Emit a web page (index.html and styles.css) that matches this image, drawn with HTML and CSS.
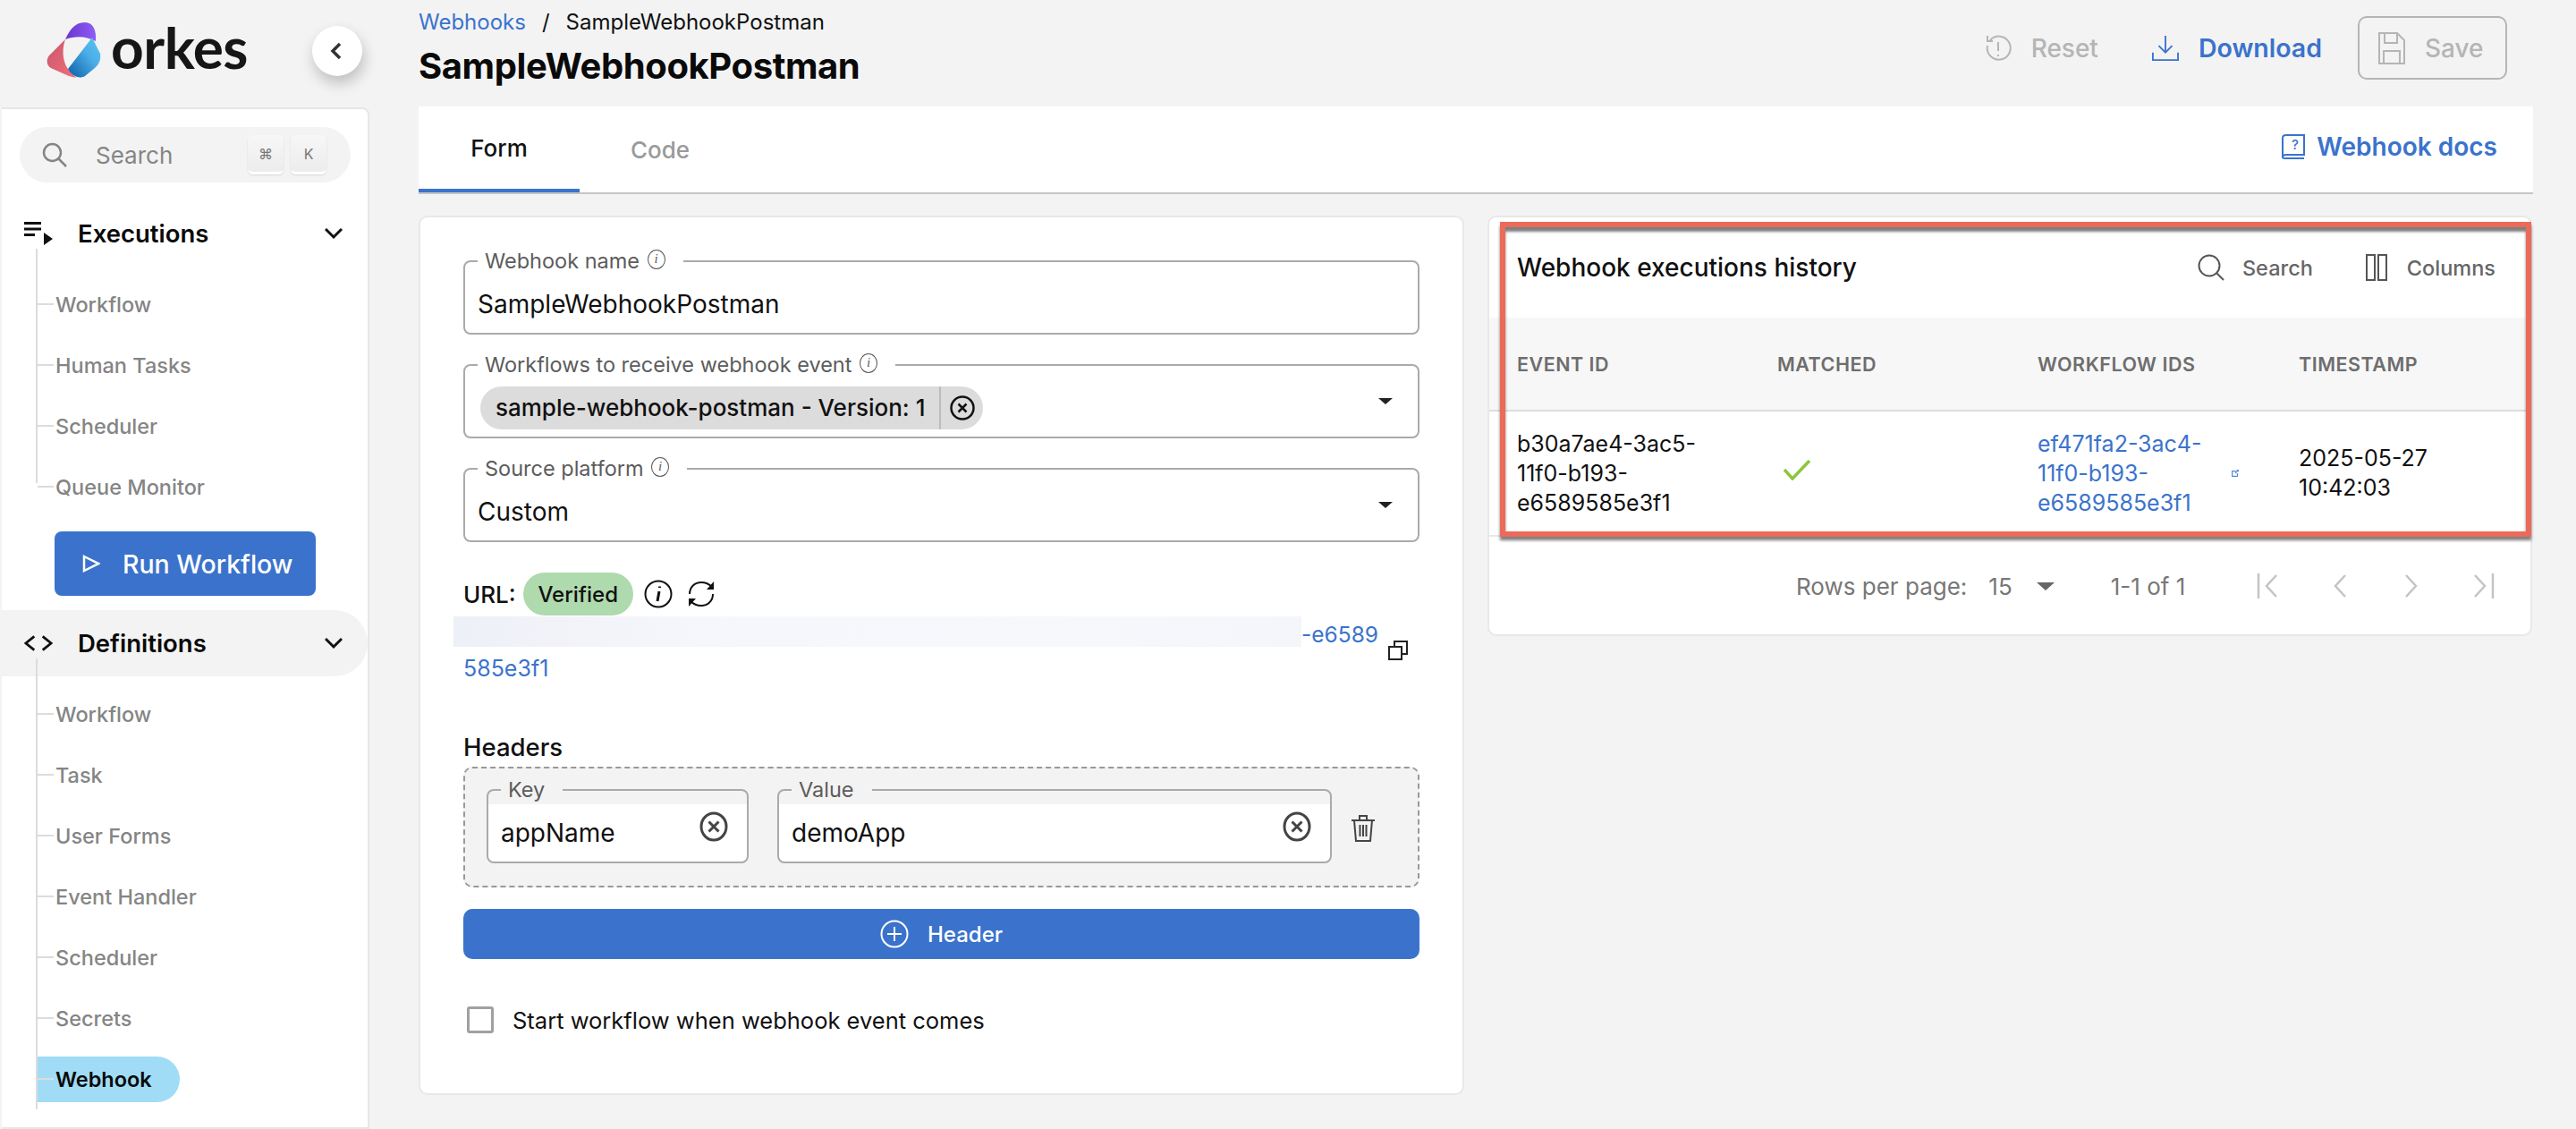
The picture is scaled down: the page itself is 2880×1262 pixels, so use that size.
FILE: index.html

```html
<!DOCTYPE html>
<html lang="en">
<head>
  <meta charset="UTF-8">
  <title>SampleWebhookPostman</title>
  <link rel="stylesheet" href="styles.css">
</head>
<body>
  <div class="app">
    <aside class="sidebar">
      <div class="brand">
        <svg class="logo-mark" viewBox="0 0 61 62">
          <defs>
            <linearGradient id="lgPurple" x1="0" y1="0" x2="1" y2="0"><stop offset="0" stop-color="#6a35d0"/><stop offset="1" stop-color="#8f5cf5"/></linearGradient>
            <linearGradient id="lgBlue" x1="0" y1="1" x2="1" y2="0"><stop offset="0" stop-color="#0d5ea8"/><stop offset=".6" stop-color="#4aaee8"/><stop offset="1" stop-color="#5cc6f2"/></linearGradient>
            <linearGradient id="lgPink" x1="0" y1="0" x2="1" y2="1"><stop offset="0" stop-color="#c9566a"/><stop offset="1" stop-color="#f0707c"/></linearGradient>
          </defs>
          <path fill="url(#lgPink)" d="M21 19 L3 37 C-1 42 0 50 7 52 L25 60 L33 62 L24 52 C18 44 17 30 21 19Z"/>
          <path fill="url(#lgPurple)" d="M21 19 C26 9 31 0 43 0 C52 0 56 9 55 21 C44 15 32 15 21 19Z"/>
          <path fill="url(#lgBlue)" d="M51 17 L60 35 C61 42 59 47 54 51 L43 60 C38 63 30 62 24 52 Z"/>
        </svg>
        <span class="logo-text">orkes</span>
        <button class="collapse-btn">
          <svg viewBox="0 0 24 24" class="icon-collapse"><path d="M15 4 L7 12 L15 20" /></svg>
        </button>
      </div>

      <nav class="panel">
        <div class="search-pill">
          <svg class="search-icon" viewBox="0 0 28 28"><circle cx="11.5" cy="11.5" r="9.5"/><path d="M18.5 18.5 L27 27"/></svg>
          <span class="search-label">Search</span>
          <span class="key">⌘</span>
          <span class="key">K</span>
        </div>

        <div class="nav-head">
          <svg class="nav-icon" viewBox="0 0 32 28"><path class="solid" d="M0 1h19v3H0zM0 7.500h19v3H0zM0 14h12v3H0zM22 13l10 7-10 7z"/></svg>
          <span class="nav-title">Executions</span>
          <svg class="chevron" viewBox="0 0 20 14"><path d="M1 2 L10 11 L19 2"/></svg>
        </div>
        <ul class="tree tree-short">
          <li><a><span>Workflow</span></a></li>
          <li><a><span>Human Tasks</span></a></li>
          <li><a><span>Scheduler</span></a></li>
          <li><a><span>Queue Monitor</span></a></li>
        </ul>

        <button class="run-btn">
          <svg viewBox="0 0 20 20" class="run-icon"><path d="M2 2 L18 10 L2 18 Z"/></svg>
          Run Workflow
        </button>

        <div class="nav-head nav-head-active">
          <svg class="nav-icon" viewBox="0 0 34 20"><path d="M12 2 L2 10 L12 18M22 2 L32 10 L22 18"/></svg>
          <span class="nav-title">Definitions</span>
          <svg class="chevron" viewBox="0 0 20 14"><path d="M1 2 L10 11 L19 2"/></svg>
        </div>
        <ul class="tree">
          <li><a><span>Workflow</span></a></li>
          <li><a><span>Task</span></a></li>
          <li><a><span>User Forms</span></a></li>
          <li><a><span>Event Handler</span></a></li>
          <li><a><span>Scheduler</span></a></li>
          <li><a><span>Secrets</span></a></li>
          <li><a class="current"><span>Webhook</span></a></li>
        </ul>
      </nav>
    </aside>

    <main class="main">
      <header class="topbar">
        <div>
          <div class="crumbs"><a>Webhooks</a><span class="crumb-sep">/</span><span>SampleWebhookPostman</span></div>
          <h1>SampleWebhookPostman</h1>
        </div>
        <div class="actions">
          <span class="action action-off">
            <svg viewBox="0 0 30 32" class="action-icon"><path d="M6 7 A13 13 0 1 1 3 13M3 2 V8 H9"/><path d="M15 9 V19M15 23 V25"/></svg>
            Reset
          </span>
          <span class="action action-blue">
            <svg viewBox="0 0 32 32" class="action-icon"><path d="M16 1 V21M8 13 L16 21 L24 13M1 21 V30 H31 V21"/></svg>
            Download
          </span>
          <span class="action action-off save-btn">
            <svg viewBox="0 0 32 38" class="save-icon"><path d="M2 2 H22 L30 10 V36 H2 Z"/><path d="M8 2 V13 H22 V2M7 36 V22 H25 V36"/></svg>
            Save
          </span>
        </div>
      </header>

      <div class="tabs">
        <a class="tab tab-on">Form</a>
        <a class="tab">Code</a>
        <a class="docs-link">
          <svg viewBox="0 0 26 28" class="docs-icon"><path d="M5 1 H25 V23 H5 C3 23 1 24 1 26 V4 C1 2 3 1 5 1ZM1 26 C1 27 3 27 5 27 H25"/><text x="15" y="17" class="docs-q">?</text></svg>
          Webhook docs
        </a>
      </div>

      <div class="columns">
        <section class="card form-card">
          <fieldset class="field">
            <legend>Webhook name <i class="tip">i</i></legend>
            <div class="field-body">SampleWebhookPostman</div>
          </fieldset>

          <fieldset class="field">
            <legend>Workflows to receive webhook event <i class="tip">i</i></legend>
            <div class="field-body chip-body">
              <span class="chip">
                <span class="chip-text">sample-webhook-postman - Version: 1</span>
                <svg viewBox="0 0 28 28" class="chip-x"><circle cx="14" cy="14" r="12.500"/><path d="M9.500 9.500 L18.500 18.500M18.500 9.500 L9.500 18.500"/></svg>
              </span>
              <span class="caret"></span>
            </div>
          </fieldset>

          <fieldset class="field">
            <legend>Source platform <i class="tip">i</i></legend>
            <div class="field-body">Custom<span class="caret"></span></div>
          </fieldset>

          <div class="url-row">
            <span>URL:</span>
            <span class="verified">Verified</span>
            <svg viewBox="0 0 32 32" class="url-icon"><circle cx="16" cy="16" r="14.500"/><path class="thick" d="M17 13 L15 24M17.500 7.500 V9"/></svg>
            <svg viewBox="0 0 32 32" class="url-icon"><path d="M3 16 C3 8 9 3 16 3 C21 3 25 5 28 8M29 16 C29 24 23 29 16 29 C11 29 7 27 4 24"/><path class="fill" d="M30 2 V11 H22ZM2 30 V21 H10Z"/></svg>
          </div>
          <div class="url-wrap">
            <div class="url-text">
              <div class="url-line"><span class="url-blur"></span><span class="url-tail">-e6589</span></div>
              <div class="url-line">585e3f1</div>
            </div>
            <svg viewBox="0 0 24 24" class="copy-icon"><path d="M8 7 V2 H22 V16 H17M2 8 H16 V22 H2 Z"/></svg>
          </div>

          <div class="headers-title">Headers</div>
          <div class="headers-box">
            <fieldset class="field key-field">
              <legend>Key</legend>
              <div class="field-body">appName
                <svg viewBox="0 0 32 36" class="clear-icon"><ellipse cx="16" cy="18" rx="14" ry="15"/><path d="M10.500 12.500 L21.500 23.500M21.500 12.500 L10.500 23.500"/></svg>
              </div>
            </fieldset>
            <fieldset class="field value-field">
              <legend>Value</legend>
              <div class="field-body">demoApp
                <svg viewBox="0 0 32 36" class="clear-icon"><ellipse cx="16" cy="18" rx="14" ry="15"/><path d="M10.500 12.500 L21.500 23.500M21.500 12.500 L10.500 23.500"/></svg>
              </div>
            </fieldset>
            <svg viewBox="0 0 28 32" class="trash-icon"><path d="M1 7 H27M10 7 V2 H18 V7M4 7 L6 30 H22 L24 7M10.500 12 V25M14 12 V25M17.500 12 V25"/></svg>
          </div>

          <button class="add-btn">
            <svg viewBox="0 0 32 32" class="add-icon"><circle cx="16" cy="16" r="14.500"/><path d="M16 8 V24M8 16 H24"/></svg>
            Header
          </button>

          <label class="check-row">
            <span class="checkbox"></span>
            Start workflow when webhook event comes
          </label>
        </section>

        <section class="card history-card">
          <div class="history-head">
            <span class="history-title">Webhook executions history</span>
            <span class="tool">
              <svg viewBox="0 0 30 30" class="tool-icon"><circle cx="13" cy="13" r="11.500"/><path d="M21 21 L29 29"/></svg>
              Search
            </span>
            <span class="tool tool-cols">
              <svg viewBox="0 0 24 30" class="cols-icon"><path d="M1 1 H10 V29 H1 ZM14 1 H23 V29 H14 Z"/></svg>
              Columns
            </span>
          </div>
          <table class="history-table">
            <colgroup><col class="col-a"><col class="col-b"><col class="col-c"><col></colgroup>
            <thead>
              <tr><th>EVENT ID</th><th>MATCHED</th><th>WORKFLOW IDS</th><th>TIMESTAMP</th></tr>
            </thead>
            <tbody>
              <tr>
                <td>b30a7ae4-3ac5-<br>11f0-b193-<br>e6589585e3f1</td>
                <td><svg viewBox="0 0 32 24" class="check-icon"><path d="M2 12 L11 22 L30 2"/></svg></td>
                <td>
                  <div class="id-cell">
                    <a>ef471fa2-3ac4-<br>11f0-b193-<br>e6589585e3f1</a>
                    <svg viewBox="0 0 12 12" class="ext-icon"><path d="M7 3 H2 V10 H9 V6M6 6 L10 2M8 2 H10 V4"/></svg>
                  </div>
                </td>
                <td>2025-05-27<br>10:42:03</td>
              </tr>
            </tbody>
          </table>
          <div class="pager">
            <span>Rows per page:</span>
            <span class="pager-num">15</span>
            <span class="pager-caret"></span>
            <span class="pager-range">1-1 of 1</span>
            <svg viewBox="0 0 26 30" class="pager-first"><path d="M2 1 V29M22 3 L11 15 L22 27"/></svg>
            <svg viewBox="0 0 14 30" class="pager-prev"><path d="M13 3 L2 15 L13 27"/></svg>
            <svg viewBox="0 0 14 30" class="pager-next"><path d="M1 3 L12 15 L1 27"/></svg>
            <svg viewBox="0 0 26 30" class="pager-last"><path d="M24 1 V29M4 3 L15 15 L4 27"/></svg>
          </div>
          <div class="callout"></div>
        </section>
      </div>
    </main>
  </div>
</body>
</html>
```

FILE: styles.css

```css
* { box-sizing: border-box; }

html, body {
  margin: 0;
  height: 100%;
  overflow: hidden;
}

body {
  background: #f3f3f3;
  color: #111;
  font-family: "Inter", "Liberation Sans", sans-serif;
  font-size: 26px;
}

svg { display: block; flex: none; fill: none; stroke: currentColor; stroke-width: 2; }
a { color: inherit; text-decoration: none; }
button { font-family: inherit; border: 0; }

.app { display: flex; height: 1262px; }

/* sidebar */
.sidebar { width: 411px; margin-left: 2px; flex: none; display: flex; flex-direction: column; }
.brand { height: 120px; display: flex; align-items: flex-start; position: relative; }
.logo-mark { width: 61px; height: 62px; margin: 25px 0 0 50px; stroke: none; }
.logo-text { font-family: "Lato", sans-serif; font-size: 64px; font-weight: 700; line-height: 70px; margin: 18px 0 0 11px; color: #161616; letter-spacing: -0.5px; }
.collapse-btn {
  position: absolute; left: 347px; top: 29px;
  width: 56px; height: 56px; border-radius: 50%;
  background: #fff; box-shadow: 2px 8px 16px rgba(0,0,0,.22);
  display: flex; align-items: center; justify-content: center; padding: 0;
}
.icon-collapse { width: 24px; height: 24px; stroke: #333; stroke-width: 3.5; }

.panel {
  flex: 1; background: #fff;
  border: 2px solid #e6e6e6; border-left-width: 0; border-radius: 0 8px 0 0;
  padding-top: 20px;
}
.search-pill {
  height: 62px; margin: 0 19px 0 20px; border-radius: 31px; background: #f3f3f3;
  display: flex; align-items: center; padding: 0 27px 0 25px; color: #858585;
}
.search-icon { width: 28px; height: 28px; stroke: #858585; stroke-width: 2.5; }
.search-label { margin-left: 32px; flex: 1; font-size: 26px; }
.key {
  width: 40px; height: 44px; margin-left: 8px; border-radius: 6px;
  background: linear-gradient(#f7f7f7, #ececec); border-bottom: 3px solid #fff; box-shadow: 0 1px 2px rgba(0,0,0,.12);
  font-size: 16px; color: #777; display: flex; align-items: center; justify-content: center;
}

.nav-head { height: 74px; margin-top: 20px; display: flex; align-items: center; padding: 0 28px 0 25px; position: relative; }
.nav-icon { width: 32px; height: 28px; stroke: #111; stroke-width: 3; }
.nav-icon .solid { fill: #111; stroke: none; }
.nav-title { margin-left: 28px; flex: 1; font-size: 27.5px; font-weight: 600; color: #0a0a0a; }
.chevron { width: 20px; height: 14px; stroke: #111; stroke-width: 3; }
.nav-head-active { margin-top: 16px; background: #f3f3f3; border-radius: 0 37px 37px 0; }

.tree { list-style: none; margin: 0 0 0 38px; padding: 8px 0 0; position: relative; }
.tree::after { content: ""; position: absolute; left: 0; top: -20px; bottom: 0; width: 2px; background: #dcdcdc; }
.tree-short::after { bottom: 38px; }
.tree li { height: 68px; display: flex; align-items: center; }
.tree a { display: flex; align-items: center; height: 51px; font-size: 23.5px; font-weight: 500; color: #858585; padding-right: 28px; }
.tree a::before { content: ""; width: 18px; height: 2px; margin: 0 2px 0 2px; background: #dcdcdc; }
.tree a.current { background: #a0dcf6; color: #0a0a0a; font-weight: 600; border-radius: 0 26px 26px 0; padding-right: 31px; }

.run-btn {
  display: flex; align-items: center; width: 292px; height: 72px; margin: 16px 0 0 59px;
  background: #3b73cc; color: #fff; border-radius: 8px; font-size: 28.5px; font-weight: 500; padding: 0 0 0 31px;
}
.run-icon { width: 20px; height: 20px; margin-right: 25px; stroke-width: 2.500; }

/* top bar */
.main { flex: 1; min-width: 0; padding: 0 48px 0 55px; }
.topbar { height: 119px; display: flex; justify-content: space-between; align-items: flex-start; }
.crumbs { display: flex; font-size: 24px; line-height: 30px; margin-top: 10px; }
.crumbs a { color: #3b73cc; }
.crumb-sep { margin: 0 18px; }
h1 { margin: 9px 0 0; font-size: 40px; line-height: 50px; font-weight: 700; color: #0a0a0a; letter-spacing: -0.4px; }

.actions { display: flex; align-items: center; margin: 18px 29px 0 0; height: 71px; }
.action { display: flex; align-items: center; font-size: 28px; font-weight: 500; }
.action-off { color: #b5b5b5; }
.action-blue { color: #3b73cc; font-weight: 600; font-size: 28.5px; margin-left: 60px; }
.action-icon { width: 30px; height: 32px; margin-right: 22px; }
.save-btn { width: 167px; height: 71px; margin-left: 40px; border: 2px solid #b5b5b5; border-radius: 10px; padding-left: 20px; }
.save-icon { width: 32px; height: 38px; margin-right: 21px; }

.tabs { height: 98px; background: #fff; border-bottom: 2px solid #c6c6c6; display: flex; align-items: flex-start; padding-right: 40px; }
.tab { width: 180px; height: 96px; display: flex; align-items: center; justify-content: center; font-size: 26px; font-weight: 500; color: #9a9a9a; }
.tab-on { color: #111; border-bottom: 4px solid #3b73cc; }
.docs-link { margin-left: auto; display: flex; align-items: center; height: 90px; color: #3b73cc; font-size: 28px; font-weight: 600; }
.docs-icon { width: 26px; height: 28px; margin-right: 13px; }
.docs-q { font-size: 15px; fill: #3b73cc; stroke: none; text-anchor: middle; font-weight: 500; }

.columns { display: grid; grid-template-columns: 1169px 1168px; gap: 26px; margin-top: 24px; align-items: start; }
.card { background: #fff; border: 2px solid #e8e8e8; border-radius: 10px; }

/* form */
.form-card { height: 983px; padding: 34px 48px 0; }
.field { margin: 0 0 19px; padding: 0; border: 2px solid #aaa; border-radius: 8px; background: #fff; min-width: 0; }
.field legend { margin-left: 14px; padding: 0 20px 0 8px; font-size: 23.5px; line-height: 30px; color: #5c5c5c; }
.tip { display: inline-block; width: 20px; height: 22px; border: 1.500px solid #555; border-radius: 50%; font-size: 15px; line-height: 19px; text-align: center; vertical-align: 6px; font-family: "Liberation Serif", serif; margin-left: 2px; }
.field-body { height: 65px; padding: 0 14px; display: flex; align-items: center; font-size: 28px; position: relative; }
.caret { position: absolute; right: 28px; top: 22px; border-style: solid; border-width: 7px 8px 0; border-color: #222 transparent transparent; }
.chip-body { padding: 0 0 0 17px; }
.chip { display: flex; align-items: center; width: 562px; height: 48px; border-radius: 24px; background: #dcdcdc; padding-left: 17px; font-size: 26px; font-weight: 500; }
.chip-text { width: 498px; border-right: 2px solid #bcbcbc; line-height: 48px; white-space: nowrap; }
.chip-x { width: 28px; height: 28px; margin-left: 10px; stroke-width: 2.500; }

.url-row { display: flex; align-items: center; height: 48px; margin-top: 34px; font-size: 26px; font-weight: 500; }
.verified { margin-left: 8px; width: 123px; height: 48px; border-radius: 24px; background: #aedaae; display: flex; align-items: center; justify-content: center; font-size: 24px; font-weight: 500; }
.url-icon { width: 32px; height: 32px; margin-left: 12px; }
.url-icon + .url-icon { margin-left: 16px; }
.url-icon .thick { stroke-width: 3; }
.url-icon .fill { fill: #111; stroke: none; }
.url-wrap { display: flex; align-items: center; }
.url-text { flex: 1; color: #3b73cc; font-size: 25px; line-height: 38px; }
.url-line { display: flex; align-items: center; height: 38px; margin-top: 2px; }
.url-line + .url-line { margin-top: 0; }
.url-blur { width: 948px; height: 34px; margin: 0 0 6px -11px; background: linear-gradient(90deg, #eef0f7, #f6f7fc 30%, #f7f8fc 70%, #f5f6fb); }
.url-tail { font-size: 24.5px; }
.copy-icon { width: 24px; height: 24px; margin-right: 12px; stroke: #222; }

.headers-title { margin-top: 50px; font-size: 27.5px; line-height: 38px; font-weight: 500; }
.headers-box { margin-top: 3px; height: 135px; padding: 9px 0 0 24px; display: flex; align-items: flex-start; background: #f3f3f3; border: 2px dashed #999; border-radius: 10px; }
.headers-box .field { margin: 0; background: linear-gradient(transparent 15px, #fff 15px); }
.key-field { width: 293px; }
.headers-box .value-field { width: 620px; margin-left: 32px; }
.clear-icon { position: absolute; right: 21px; top: 8px; width: 32px; height: 36px; stroke: #444; stroke-width: 3; }
.trash-icon { width: 28px; height: 32px; margin: 42px 0 0 21px; stroke: #444; }

.add-btn { display: flex; align-items: center; justify-content: center; width: 100%; height: 56px; margin-top: 24px; background: #3b73cc; color: #fff; border-radius: 10px; font-size: 24px; font-weight: 500; }
.add-icon { width: 32px; height: 32px; margin-right: 21px; }
.check-row { display: flex; align-items: center; height: 32px; margin-top: 52px; font-size: 25.5px; }
.checkbox { width: 30px; height: 30px; margin: 0 21px 0 4px; border: 3px solid #a0a0a0; border-radius: 3px; }

/* history */
.history-card { height: 470px; position: relative; }
.history-head { height: 112px; display: flex; align-items: center; padding: 0 39px 0 31px; }
.history-title { flex: 1; font-size: 28px; font-weight: 500; }
.tool { display: flex; align-items: center; color: #666; font-size: 23.5px; font-weight: 500; }
.tool-cols { margin-left: 59px; }
.tool-icon { width: 30px; height: 30px; margin-right: 20px; stroke: #555; }
.cols-icon { width: 24px; height: 30px; margin-right: 22px; stroke: #555; }

.history-table { width: 100%; border-collapse: collapse; table-layout: fixed; }
.col-a { width: 322px; }
.col-b { width: 291px; }
.col-c { width: 292px; }
.history-table th { height: 104px; padding: 0; background: #f7f7f7; border-bottom: 2px solid #ddd; text-align: left; font-size: 21.5px; font-weight: 600; color: #6e6e6e; letter-spacing: .5px; }
.history-table th:first-child, .history-table td:first-child { padding-left: 31px; }
.history-table td { height: 140px; padding: 0; border-bottom: 2px solid #e8e8e8; font-size: 25px; line-height: 33px; }
.id-cell { display: flex; align-items: center; color: #3b73cc; }
.id-cell a { width: 216px; }
.ext-icon { width: 10px; height: 10px; stroke: #5a8ad8; stroke-width: 1.500; }
.check-icon { width: 32px; height: 24px; margin: -8px 0 0 6px; stroke: #8cc63f; stroke-width: 3.5; }

.pager { display: flex; align-items: center; height: 110px; padding-left: 343px; color: #777; font-size: 26px; }
.pager-num { margin-left: 24px; }
.pager-caret { margin-left: 27px; border-style: solid; border-width: 9px 10px 0; border-color: #666 transparent transparent; }
.pager-range { margin-left: 63px; }
.pager svg { stroke: #c4c4c4; stroke-width: 2.500; height: 30px; }
.pager-first { width: 26px; margin-left: 80px; }
.pager-prev { width: 14px; margin-left: 60px; }
.pager-next { width: 14px; margin-left: 66px; }
.pager-last { width: 26px; margin-left: 60px; }

.callout {
  position: absolute; left: 12px; top: 5px; width: 1153px; height: 352px;
  border: 6px solid #ec6a5a;
  box-shadow: 0 4px 3px rgba(0,0,0,.5), inset 0 5px 3px rgba(0,0,0,.5);
  pointer-events: none;
}
```
